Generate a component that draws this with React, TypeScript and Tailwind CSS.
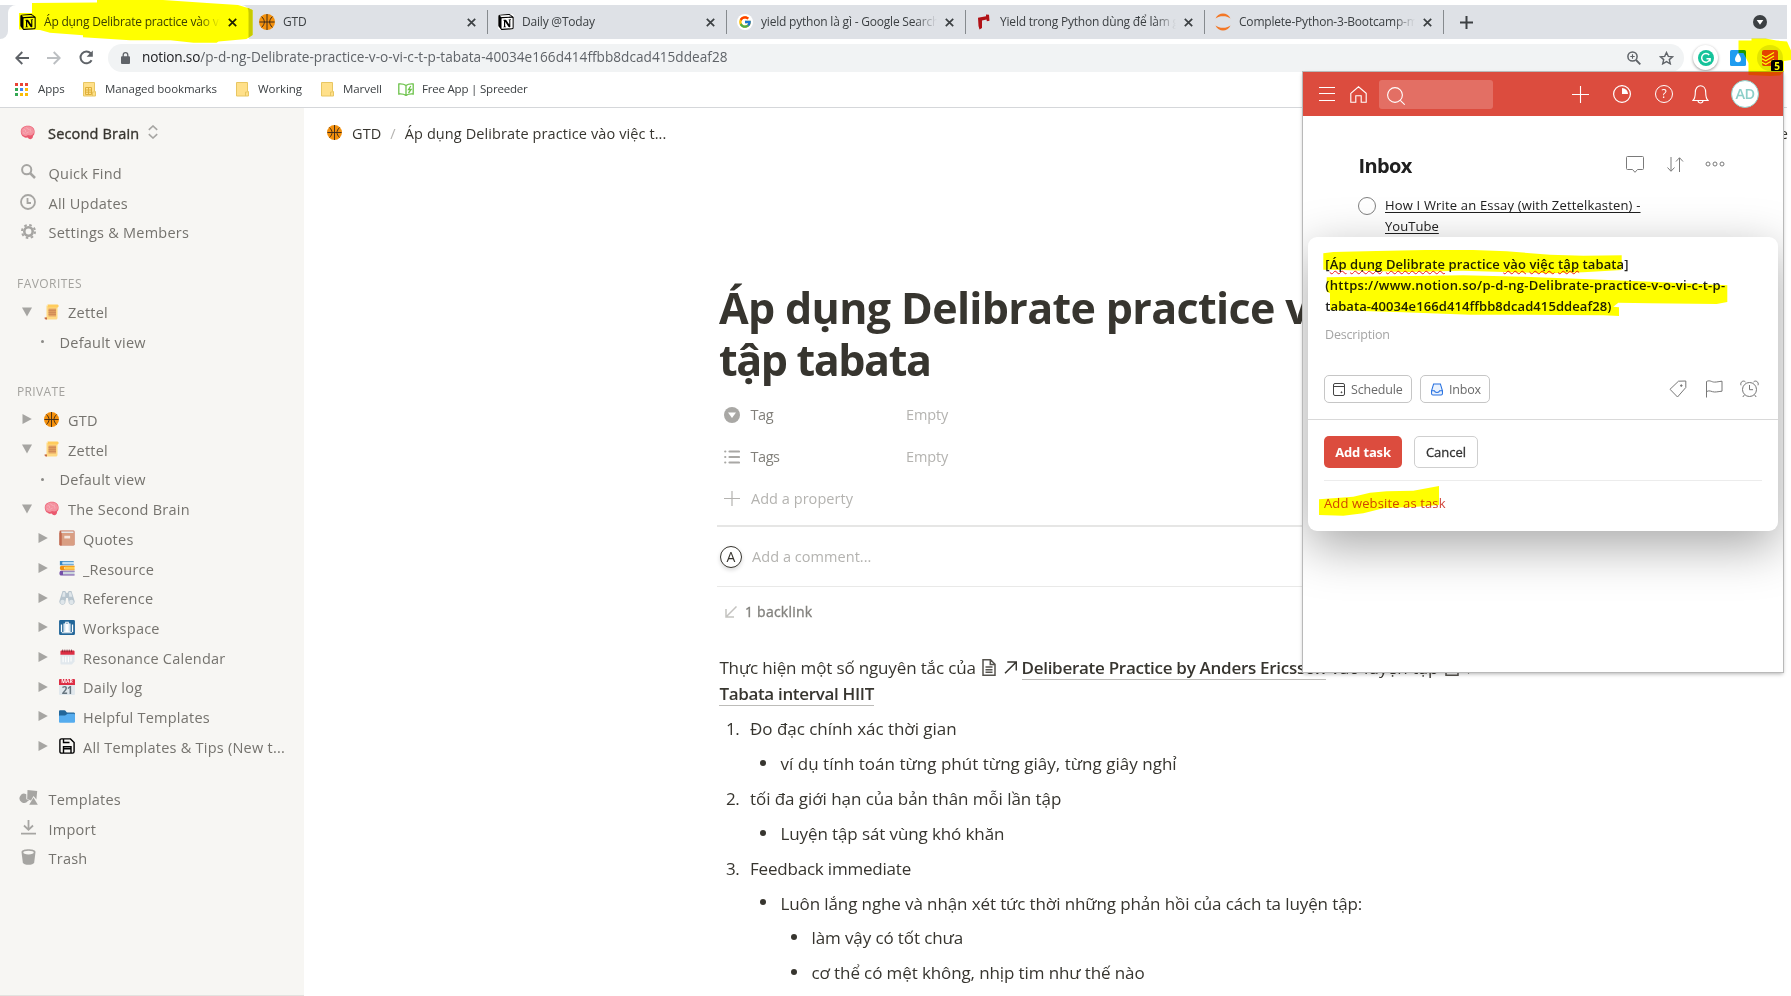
import type { ReactNode } from "react";
import { FcGoogle } from "react-icons/fc";
import { SiNotion } from "react-icons/si";

/* ---------- small drawings ---------- */

function Ball({ size = 15 }: { size?: number }) {
  return (
    <svg width={size} height={size} viewBox="0 0 36 36" className="shrink-0">
      <circle cx="18" cy="18" r="18" fill="#f4900c" />
      <path
        d="M18 0v36M1 18h34M6 6c4 4 6 8 6 12s-2 8-6 12M30 6c-4 4-6 8-6 12s2 8 6 12"
        stroke="#3b2a1a"
        strokeWidth="2.2"
        fill="none"
      />
    </svg>
  );
}

function Brain() {
  return (
    <svg width="15" height="15" viewBox="0 0 36 36" className="shrink-0">
      <path d="M2 17C1 8 9 2 19 2c10 0 16 6 16 14 0 4-1 8-4 10 1 4-2 8-6 8-3 0-5-2-7-4-3 1-7 0-9-2-4 0-7-6-7-11z" fill="#ea596e" />
      <path d="M3 15C3 8 11 3 19 3c9 0 14 5 15 12 0 4-2 7-5 9-3 2-7 1-10 0-3 3-7 3-9 1-4 0-7-4-7-10z" fill="#f4929f" />
      <path d="M8 12c4-3 7 2 5 5M15 6c1 4 6 2 7 6M25 9c-3 4 3 5 1 9M14 21c2-3 6-2 7-5M7 19c2-1 4 0 5 2" stroke="#f7bac4" strokeWidth="1.6" fill="none" />
    </svg>
  );
}

function Scroll() {
  return (
    <svg width="15" height="16" viewBox="0 0 30 32" className="shrink-0">
      <path d="M5 3h22v24c0 3-1 4-4 4H4c-3 0-3-5 0-5h1z" fill="#ffd983" />
      <path d="M6 1h21c3 0 3 6 0 6H8V4C8 2 7 1 6 1z" fill="#ffcc5c" />
      <path d="M1 27h5v4H4c-2 0-3-2-3-4z" fill="#c1694f" />
      <path d="M9 9h15v16H9z" fill="#e5a563" />
      <path d="M9 12.500h15M9 16.500h15M9 20.500h15" stroke="#c1794f" strokeWidth="1.500" />
    </svg>
  );
}

function Notebook() {
  return (
    <svg width="16" height="16" viewBox="0 0 36 36" className="shrink-0">
      <rect x="1" y="1" width="34" height="34" rx="3" fill="#c1694f" />
      <path d="M5 3h28v5H5z" fill="#e6e7e8" />
      <rect x="5" y="7" width="29" height="27" rx="2" fill="#d99e82" />
      <path d="M1 6h5v29H4c-2 0-3-1-3-3z" fill="#c1694f" />
      <rect x="12" y="13" width="13" height="6" fill="#f5e6df" />
    </svg>
  );
}

function Books() {
  return (
    <svg width="16" height="16" viewBox="0 0 36 36" className="shrink-0">
      <path d="M2 2h31v3H8v4h25v3H2z" fill="#3b88c3" />
      <path d="M8 4h25v6H8z" fill="#bfe0f5" />
      <path d="M5 13h30v3H12v5h23v2H5c-4-1-4-9 0-10z" fill="#f4900c" />
      <path d="M13 15h22v6H13z" fill="#ffcc4d" />
      <path d="M4 24h31v3H9v5h26v3H4c-4-1-4-10 0-11z" fill="#7450a8" />
      <path d="M9 26h26v6H9z" fill="#ccd6dd" />
    </svg>
  );
}

function Binoculars() {
  return (
    <svg width="16" height="16" viewBox="0 0 36 36" className="shrink-0">
      <path d="M8 2h6l3 5h2l3-5h6l7 22a7 7 0 0 1-13 5l-2-11h-4l-2 11a7 7 0 0 1-13-5z" fill="#b8c5ce" />
      <circle cx="8" cy="27" r="5" fill="#dfe6ea" />
      <circle cx="28" cy="27" r="5" fill="#dfe6ea" />
      <path d="M9 5h5v10H7zM22 5h5l3 10h-7z" fill="#dfe6ea" />
    </svg>
  );
}

function Luggage() {
  return (
    <svg width="16" height="15" viewBox="0 0 36 34" className="shrink-0">
      <rect width="36" height="34" rx="3" fill="#226699" />
      <path d="M4 10h3v17H4zM10 8h16v19H10zM29 10h3v17h-3zM14 4h8v5h-2V6h-4v3h-2zM6 28h24v2H6z" fill="#fff" />
      <path d="M13 9v17M23 9v17" stroke="#9ec6e2" strokeWidth="1.500" />
    </svg>
  );
}

function SpiralCalendar() {
  return (
    <svg width="15" height="16" viewBox="0 0 34 36" className="shrink-0">
      <path d="M1 10h32v18l-6 7H4c-2 0-3-1-3-3z" fill="#e1e8ed" />
      <path d="M3 3h28c2 0 2 2 2 4v6H1V7c0-2 0-4 2-4z" fill="#dd2e44" />
      <path d="M6 1v6M11 1v6M16 1v6M21 1v6M26 1v6" stroke="#66242e" strokeWidth="1.6" />
      <path d="M7 17v13M13 17v13M19 17v13M25 17v11" stroke="#fff" strokeWidth="2.5" />
    </svg>
  );
}

function DayCalendar() {
  return (
    <span className="flex h-4 w-4 shrink-0 flex-col overflow-hidden rounded-[1px] bg-[#e1e8ed]">
      <span className="flex h-[6px] items-center justify-center bg-[#dd2e44] text-[5px] leading-none font-bold tracking-normal text-white">MAR</span>
      <span className="flex h-[10px] items-center justify-center text-[10px] leading-none font-bold tracking-tighter text-[#66757f]">21</span>
    </span>
  );
}

function BlueFolder() {
  return (
    <svg width="16" height="13" viewBox="0 0 36 28" className="shrink-0">
      <path d="M0 3c0-2 1-3 3-3h9c3 0 4 5 7 5h13c2 0 4 1 4 3v17H0z" fill="#226699" />
      <path d="M36 25c0 2-1 3-3 3H3c-2 0-3-1-3-3V14c0-2 1-2 3-2h10c3 0 4-4 7-4h13c2 0 3 1 3 3z" fill="#55acee" />
    </svg>
  );
}

function Floppy() {
  return (
    <svg width="16" height="16" viewBox="0 0 16 16" fill="none" stroke="#000" strokeWidth="1.400" className="shrink-0">
      <path d="M2.500.9h9L15.100 4.500v9a1.600 1.600 0 0 1-1.600 1.600h-11A1.600 1.600 0 0 1 .9 13.500v-11A1.600 1.600 0 0 1 2.500.9z" />
      <path d="M4.500 1v3.500h6M4.500 15V8.700h7.500V15M4.500 10.800h7.500" />
    </svg>
  );
}

function Tri({ open }: { open?: boolean }) {
  return (
    <svg width="10" height="10" viewBox="0 0 10 10" className="shrink-0" fill="#a6a5a2">
      {open ? <path d="M0 .5h10L5 9.500z" /> : <path d="M.5 0v10L9.800 5z" />}
    </svg>
  );
}

/* ---------- browser chrome ---------- */

function TabX({ dark }: { dark?: boolean }) {
  return (
    <svg width="9" height="9" viewBox="0 0 9 9" className="shrink-0" stroke={dark ? "#202124" : "#3c4043"} strokeWidth="1.700">
      <path d="M.8.8l7.400 7.400M8.200.8L.8 8.200" />
    </svg>
  );
}

function NotionMark() {
  return <SiNotion size={16} color="#000" className="rounded-[3px] bg-white" />;
}

function Tab({ icon, title, fade }: { icon: ReactNode; title: string; fade?: boolean }) {
  return (
    <div className="flex w-[239px] shrink-0 items-center pl-[10.500px]">
      <span className="flex w-4 justify-center">{icon}</span>
      <span
        className={
          fade
            ? "ml-2 w-[176px] overflow-hidden whitespace-nowrap [mask-image:linear-gradient(to_right,black_88%,transparent)]"
            : "ml-2 w-[176px] overflow-hidden whitespace-nowrap"
        }
      >
        {title}
      </span>
      <span className="ml-2 flex">
        <TabX />
      </span>
      <span className="ml-auto h-6 w-px bg-[#868a8e]" />
    </div>
  );
}

function TabStrip() {
  return (
    <div className="mt-[5px] mr-1 flex h-[34px] bg-[#dee1e6] text-[12px] tracking-[-0.200px] text-[#3c4043]">
      <div className="flex w-2 items-stretch bg-white">
        <div className="w-full rounded-br-lg bg-[#dee1e6]" />
      </div>
      <div className="flex w-[240.500px] shrink-0 items-center rounded-t-lg bg-white pl-3">
        <NotionMark />
        <span className="ml-2 w-[176px] overflow-hidden whitespace-nowrap [mask-image:linear-gradient(to_right,black_88%,transparent)]">
          Áp dụng Delibrate practice vào việc tập tabata
        </span>
        <span className="ml-[7.500px] flex">
          <TabX dark />
        </span>
      </div>
      <Tab icon={<Ball size={16} />} title="GTD" />
      <Tab icon={<NotionMark />} title="Daily @Today" />
      <Tab
        icon={
          <span className="rounded-full bg-white p-px">
            <FcGoogle size={14} />
          </span>
        }
        title="yield python là gì - Google Search"
        fade
      />
      <Tab
        icon={
          <svg width="14" height="16" viewBox="0 0 14 16" fill="#b11116">
            <path d="M1 3.800l8-1.600V.5l3 .3.500 6-2.700.4-.2-1.600-4.600.9V14l-2.500 1.500L1.500 12z" />
          </svg>
        }
        title="Yield trong Python dùng để làm gì"
        fade
      />
      <Tab
        icon={
          <svg width="16" height="18" viewBox="0 0 16 18" fill="#f37726">
            <path d="M.5 5.500C2 2 5 .5 8 .5s6 1.500 7.500 5C13 3.800 11 3.200 8 3.200S3 3.800.5 5.500zM.5 12.500c1.500 3.500 4.500 5 7.500 5s6-1.500 7.500-5c-2.500 1.700-4.500 2.300-7.500 2.300s-5-.6-7.500-2.300z" />
          </svg>
        }
        title="Complete-Python-3-Bootcamp-master"
        fade
      />
      <div className="flex flex-1 items-center justify-between pr-5 pl-4">
        <svg width="13" height="13" viewBox="0 0 13 13" stroke="#3c4043" strokeWidth="2">
          <path d="M6.500 0v13M0 6.500h13" />
        </svg>
        <svg width="14" height="14" viewBox="0 0 14 14">
          <circle cx="7" cy="7" r="7" fill="#3c4043" />
          <path d="M3.700 5h6.600L7 9.800z" fill="#fff" />
        </svg>
      </div>
    </div>
  );
}

function Toolbar() {
  return (
    <div className="flex h-9 items-center pt-px pl-[15px]">
      <svg width="14" height="14" viewBox="0 0 14 14" fill="none" stroke="#5f6368" strokeWidth="1.900">
        <path d="M14 7H1.500M7.300 1L1.300 7l6 6" />
      </svg>
      <svg width="14" height="14" viewBox="0 0 14 14" fill="none" stroke="#bcbfc2" strokeWidth="1.900" className="ml-[18px]">
        <path d="M0 7h12.500M6.700 1l6 6-6 6" />
      </svg>
      <svg width="15" height="15" viewBox="0 0 15 15" className="ml-[18px]">
        <path d="M12.600 10.200A5.900 5.900 0 1 1 11.700 3.300" fill="none" stroke="#5f6368" strokeWidth="2" />
        <path d="M13.800.5v6.200H7.600z" fill="#5f6368" />
      </svg>
      <div className="ml-[14px] flex h-7 w-[1576px] items-center rounded-full bg-[#f1f3f4] pr-[10px] pl-[13px]">
        <svg width="9" height="12" viewBox="0 0 9 12">
          <rect y="4.200" width="9" height="7.800" rx="1" fill="#5f6368" />
          <path d="M2.200 5V3a2.300 2.300 0 0 1 4.600 0v2" fill="none" stroke="#5f6368" strokeWidth="1.300" />
        </svg>
        <span className="ml-3 text-[13.600px] tracking-[0.030px] whitespace-nowrap text-[#5f6368]">
          <span className="tracking-[-0.150px] text-[#202124]">notion.so</span>
          /p-d-ng-Delibrate-practice-v-o-vi-c-t-p-tabata-40034e166d414ffbb8dcad415ddeaf28
        </span>
        <span className="flex-1" />
        <svg width="14" height="14" viewBox="0 0 14 14" fill="none" stroke="#5f6368" strokeWidth="1.500">
          <circle cx="5.500" cy="5.500" r="4.600" />
          <path d="M9 9l4.300 4.300" strokeWidth="1.800" />
          <path d="M5.500 3.300v4.400M3.300 5.500h4.400" strokeWidth="1.100" />
        </svg>
        <svg width="15" height="14" viewBox="0 0 15 14" fill="none" stroke="#5f6368" strokeWidth="1.400" className="ml-[18px]">
          <path d="M7.500 1.500l1.800 3.900 4.200.4-3.200 2.800 1 4.200-3.800-2.200-3.800 2.200 1-4.200L1.500 5.800l4.200-.4z" />
        </svg>
      </div>
      <span className="ml-[9px] flex h-[25px] w-[25px] items-center justify-center rounded-full bg-white shadow-[0_1px_3px_rgba(0,0,0,0.400)]">
        <svg width="16" height="16" viewBox="0 0 16 16">
          <circle cx="8" cy="8" r="8" fill="#15c39a" />
          <path d="M11.200 5A4.300 4.300 0 1 0 12 9.300M8.500 8.800h3.600v2.700" fill="none" stroke="#fff" strokeWidth="1.500" />
        </svg>
      </span>
      <svg width="16" height="16" viewBox="0 0 16 16" className="ml-[12px]">
        <rect width="16" height="16" rx="1.500" fill="#1f9cf0" />
        <path d="M8 3c2 3 3 4.600 3 6.300a3 3 0 0 1-6 0C5 7.600 6 6 8 3z" fill="#fff" />
      </svg>
      <span className="relative ml-[11px] flex h-[26px] w-[26px] items-center justify-center rounded-full bg-[#e3e5e7]">
        <svg width="16" height="16" viewBox="0 0 16 16">
          <rect width="16" height="16" rx="2" fill="#e44332" />
          <path d="M0 5.200l3.800 2L12 2.600M0 8.700l3.800 2L12 6.100M0 12.200l3.800 2L12 9.600" fill="none" stroke="#fff" strokeWidth="1.200" />
        </svg>
        <span className="absolute right-0 -bottom-[1px] flex h-3 w-3 items-center justify-center rounded-[2px] bg-black text-[10px] leading-none font-bold text-white">
          5
        </span>
      </span>
    </div>
  );
}

function YellowFolder({ grid }: { grid?: boolean }) {
  return (
    <svg width="13" height="15" viewBox="0 0 13 15">
      <path d="M.5.5h11v9h1v4.500H.5z" fill="#ffe08a" stroke="#e8c662" />
      <path d="M9.500 14V10h2" fill="none" stroke="#e8c662" />
      {grid && <path d="M2.500 5.500h6v7h-6zM2.500 8h6M2.500 10.200h6M5.500 5.500v7" fill="none" stroke="#dfb03a" />}
    </svg>
  );
}

function Bookmarks() {
  const colors = ["#ea4335", "#ea4335", "#ea4335", "#34a853", "#4285f4", "#fbbc04", "#34a853", "#fbbc04", "#fbbc04"];
  return (
    <div className="mr-1 flex h-[33px] items-center border-b border-[#d5d7da] pb-[4px] pl-[15px] text-[11.500px] tracking-[-0.070px] text-[#3c4043]">
      <svg width="13" height="13" viewBox="0 0 13 13">
        {colors.map((c, i) => (
          <rect key={i} x={(i % 3) * 5} y={Math.floor(i / 3) * 5} width="3" height="3" fill={c} />
        ))}
      </svg>
      <span className="ml-[10px] w-[45px]">Apps</span>
      <YellowFolder grid />
      <span className="ml-[9px] w-[131px] whitespace-nowrap">Managed bookmarks</span>
      <YellowFolder />
      <span className="ml-[9px] w-[63px]">Working</span>
      <YellowFolder />
      <span className="ml-[9px] w-[55px]">Marvell</span>
      <svg width="16" height="13" viewBox="0 0 16 13" fill="none" stroke="#6cc24a" strokeWidth="1.300">
        <path d="M8 2.500C6 1 3.500.8.800 1v10c2.700-.2 5.200 0 7.200 1.500 2-1.500 4.500-1.700 7.200-1.500V1C12.500.8 10 1 8 2.500zM8 2.500v10" />
        <path d="M12.800 3l-2.300 3.500h2.600L10.500 10" />
      </svg>
      <span className="ml-2 tracking-[-0.200px] whitespace-nowrap">Free App | Spreeder</span>
    </div>
  );
}

/* ---------- sidebar ---------- */

function MenuRow({ icon, label }: { icon: ReactNode; label: string }) {
  return (
    <div className="flex h-[29.700px] items-center pl-[19px]">
      <span className="mb-[3px] flex w-[18px] justify-center">{icon}</span>
      <span className="mt-px ml-[11.500px]">{label}</span>
    </div>
  );
}

function PageRow({ icon, label, open, nested }: { icon: ReactNode; label: string; open?: boolean; nested?: boolean }) {
  return (
    <div className={nested ? "flex h-[29.700px] items-center pl-[38px]" : "flex h-[29.700px] items-center pl-[22px]"}>
      <span className="mb-[2px] flex">
        <Tri open={open} />
      </span>
      <span className="mb-[2px] ml-[11px] flex w-4 justify-center">{icon}</span>
      <span className={nested ? "mt-px ml-[8px] whitespace-nowrap" : "mt-px ml-[9px] whitespace-nowrap"}>{label}</span>
    </div>
  );
}

function ViewRow() {
  return (
    <div className="flex h-[29.700px] items-center pl-[41px]">
      <span className="mb-px h-[3px] w-[3px] rounded-full bg-[#8b8a87]" />
      <span className="mt-px ml-[15.500px]">Default view</span>
    </div>
  );
}

function Sidebar() {
  return (
    <aside className="w-[304px] shrink-0 border-b border-[#e3e2df] bg-[#f7f6f3] text-[14.500px] tracking-[0.240px] text-[#75736e]">
      <div className="flex h-[50.500px] items-center pl-5 tracking-[0.180px] text-[#37352f]">
        <span className="mb-0.5">
          <Brain />
        </span>
        <span className="mt-px ml-[13px] [-webkit-text-stroke:0.350px_#37352f]">Second Brain</span>
        <svg width="10" height="14" viewBox="0 0 10 14" fill="none" stroke="#a6a5a2" strokeWidth="1.600" className="mb-0.5 ml-[9px]">
          <path d="M.8 4.800L5 1l4.200 3.800M.8 9.200L5 13l4.200-3.800" />
        </svg>
      </div>
      <MenuRow
        label="Quick Find"
        icon={
          <svg width="15" height="15" viewBox="0 0 15 15" fill="none" stroke="#a6a5a2" strokeWidth="2">
            <circle cx="5.700" cy="5.700" r="4.600" />
            <path d="M9 9l5 5" strokeWidth="2.500" />
          </svg>
        }
      />
      <MenuRow
        label="All Updates"
        icon={
          <svg width="16" height="16" viewBox="0 0 16 16" fill="none" stroke="#a6a5a2" strokeWidth="1.800">
            <circle cx="8" cy="8" r="7" />
            <path d="M7.500 4v5H11" />
          </svg>
        }
      />
      <MenuRow
        label="Settings & Members"
        icon={
          <svg width="15" height="15" viewBox="0 0 15 15" fill="none" stroke="#a6a5a2">
            <circle cx="7.500" cy="7.500" r="4.200" strokeWidth="2.600" />
            <circle cx="7.500" cy="7.500" r="6.500" strokeWidth="2" strokeDasharray="2.550 2.550" />
          </svg>
        }
      />
      <div className="mt-[22.300px] flex h-7 items-center pl-[17px] text-[12px] tracking-[0.450px] text-[#a3a29e]">FAVORITES</div>
      <PageRow open icon={<Scroll />} label="Zettel" />
      <ViewRow />
      <div className="mt-[20.400px] flex h-7 items-center pl-[17px] text-[12px] tracking-[0.350px] text-[#a3a29e]">PRIVATE</div>
      <PageRow icon={<Ball />} label="GTD" />
      <PageRow open icon={<Scroll />} label="Zettel" />
      <ViewRow />
      <PageRow open icon={<Brain />} label="The Second Brain" />
      <PageRow nested icon={<Notebook />} label="Quotes" />
      <PageRow nested icon={<Books />} label="_Resource" />
      <PageRow nested icon={<Binoculars />} label="Reference" />
      <PageRow nested icon={<Luggage />} label="Workspace" />
      <PageRow nested icon={<SpiralCalendar />} label="Resonance Calendar" />
      <PageRow nested icon={<DayCalendar />} label="Daily log" />
      <PageRow nested icon={<BlueFolder />} label="Helpful Templates" />
      <PageRow nested icon={<Floppy />} label="All Templates & Tips (New t..." />
      <div className="h-[22.500px]" />
      <MenuRow
        label="Templates"
        icon={
          <svg width="19" height="15" viewBox="0 0 19 15" fill="#a6a5a2" className="shrink-0">
            <path d="M8.500 0l9.700 1-.8 8.500L14.500 6 12 10.500 8.200 9z" />
            <path d="M7.300 4.200A4.600 4.600 0 1 0 8.900 11l1.500-1-3.100-.8z" />
            <path d="M14.500 7.600l4.300 7.200h-8.600z" />
          </svg>
        }
      />
      <MenuRow
        label="Import"
        icon={
          <svg width="15" height="15" viewBox="0 0 15 15" fill="none" stroke="#a6a5a2" strokeWidth="1.800">
            <path d="M7.500 0v9.500M3 5.500l4.500 4.300L12 5.500M0 13.700h15" />
          </svg>
        }
      />
      <MenuRow
        label="Trash"
        icon={
          <svg width="15" height="16" viewBox="0 0 15 16">
            <path d="M.5 3C.5 1 4 .2 7.500.2s7 .8 7 2.800l-1.300 10.500c-.4 1.600-3 2.300-5.700 2.300s-5.300-.7-5.700-2.300z" fill="#a6a5a2" />
            <ellipse cx="7.500" cy="3.600" rx="5.200" ry="1.800" fill="#f7f6f3" />
          </svg>
        }
      />
    </aside>
  );
}

/* ---------- document ---------- */

function Property({ icon, name }: { icon: ReactNode; name: string }) {
  return (
    <div className="flex h-[41.700px] items-center pl-[7px]">
      <span className="flex w-4 justify-center">{icon}</span>
      <span className="ml-[10.500px] w-[155.500px] tracking-[-0.450px] text-[#82807b]">{name}</span>
      <span className="tracking-[-0.150px] text-[#b4b3b0]">Empty</span>
    </div>
  );
}

function PageGlyph() {
  return (
    <span className="mr-[1.500px] ml-[2px] inline-flex w-[38px] items-center justify-between align-[-2px]">
      <svg width="14" height="17" viewBox="0 0 14 17" fill="none" stroke="#55534e" strokeWidth="1.500">
        <path d="M1 .8h7.500L13 5.300v10.900H1zM8.300 1v4.500H13M3.500 8h7M3.500 10.700h7M3.500 13.300h7" />
      </svg>
      <svg width="13" height="13" viewBox="0 0 13 13" fill="none" stroke="#37352f" strokeWidth="1.500" className="mr-[3px]">
        <path d="M1 12.300L12 1.200M3.300.9h9v8.600" />
      </svg>
    </span>
  );
}

function Numbered({ n, children }: { n: number; children: ReactNode }) {
  return (
    <div className="flex h-[34.850px] items-center pl-[9px]">
      <span className="w-6 tracking-[-0.500px]">{n}.</span>
      <span>{children}</span>
    </div>
  );
}

function Bullet({ deep, children }: { deep?: boolean; children: ReactNode }) {
  return (
    <div className={deep ? "flex h-[34.850px] items-center pl-[73.500px]" : "flex h-[34.850px] items-center pl-[42.500px]"}>
      <span className="mb-[2px] h-[6px] w-[6px] rounded-full bg-[#37352f]" />
      <span className="ml-[15px]">{children}</span>
    </div>
  );
}

function Doc() {
  return (
    <main className="min-w-0 flex-1 overflow-hidden bg-white text-[#37352f]">
      <div className="flex h-[51px] items-center pr-[3px] pl-[23px] text-[14.500px] tracking-[0.100px] whitespace-nowrap">
        <span className="mb-[3px] flex">
          <Ball />
        </span>
        <span className="ml-[10px]">GTD</span>
        <span className="ml-[9px] text-[#b4b3b0]">/</span>
        <span className="ml-[9px]">Áp dụng Delibrate practice vào việc t...</span>
        <span className="ml-auto">Share</span>
      </div>

      <div className="ml-[413px] w-[810px] pt-[123px]">
        <h1 className="h-[104px] pl-0.5 text-[43px] leading-[52px] font-bold whitespace-nowrap">
          <span className="block tracking-[-0.660px]">Áp dụng Delibrate practice vào việc</span>
          <span className="block tracking-[-1.400px]">tập tabata</span>
        </h1>

        <div className="mt-[8.500px] text-[14.500px]">
          <Property
            name="Tag"
            icon={
              <svg width="16" height="16" viewBox="0 0 16 16">
                <circle cx="8" cy="8" r="8" fill="#a9a8a5" />
                <path d="M4 5.500h8L8 11z" fill="#fff" />
              </svg>
            }
          />
          <Property
            name="Tags"
            icon={
              <svg width="16" height="14" viewBox="0 0 16 14" stroke="#a9a8a5" strokeWidth="2.200" strokeLinecap="round">
                <path d="M5.500 1.500H15M5.500 7H15M5.500 12.500H15M1.200 1.500h.1M1.200 7h.1M1.200 12.500h.1" />
              </svg>
            }
          />
          <div className="flex h-[41.700px] items-center pl-[7px] tracking-[0.040px] text-[#b4b3b0]">
            <svg width="16" height="15" viewBox="0 0 16 15" stroke="#b4b3b0" strokeWidth="1.200">
              <path d="M8 0v15M0 7.500h16" />
            </svg>
            <span className="ml-[11px]">Add a property</span>
          </div>
        </div>

        <div className="mt-[5.100px] flex h-[62px] items-center border-t-2 border-b border-t-[#e6e6e5] border-b-[#e9e9e8] pt-[2px] pl-[3px] text-[14.500px] text-[#b4b3b0]">
          <span className="flex h-[22px] w-[22px] items-center justify-center rounded-full border border-[#37352f] bg-white text-[14px] leading-none text-[#37352f] shadow-[0_2px_4px_rgba(0,0,0,0.150)]">
            A
          </span>
          <span className="ml-[10px] tracking-[0.050px]">Add a comment...</span>
        </div>

        <div className="flex h-[50px] items-center pl-2 text-[14px] tracking-[0.230px] text-[#83827e]">
          <svg width="12" height="12" viewBox="0 0 12 12" fill="none" stroke="#c4c3c0" strokeWidth="1.500">
            <path d="M11.500.5L1.500 10.500M1 3v8h8" />
          </svg>
          <span className="ml-2 [-webkit-text-stroke:0.350px_#83827e]">1 backlink</span>
        </div>

        <div className="mt-[18px] pl-[2.400px] text-[17px] leading-[26px] tracking-[-0.150px] whitespace-nowrap">
          Thực hiện một số nguyên tắc của{" "}
          <PageGlyph />
          <span className="border-b border-[#bdbcb9] font-semibold tracking-[-0.280px]">Deliberate Practice by Anders Ericsson</span>
          <span className="ml-px tracking-[0.100px]"> vào luyện tập </span>
          <PageGlyph />
          <br />
          <span className="border-b border-[#bdbcb9] font-semibold tracking-[-0.330px]">Tabata interval HIIT</span>
        </div>

        <div className="mt-[5px] text-[17px] tracking-[-0.110px] whitespace-nowrap">
          <Numbered n={1}>
            <span className="tracking-[-0.030px]">Đo đạc chính xác thời gian</span>
          </Numbered>
          <Bullet>
            <span className="tracking-[0.020px]">ví dụ tính toán từng phút từng giây, từng giây nghỉ</span>
          </Bullet>
          <Numbered n={2}>
            <span className="tracking-[-0.060px]">tối đa giới hạn của bản thân mỗi lần tập</span>
          </Numbered>
          <Bullet>Luyện tập sát vùng khó khăn</Bullet>
          <Numbered n={3}>
            <span className="tracking-[-0.200px]">Feedback immediate</span>
          </Numbered>
          <Bullet>Luôn lắng nghe và nhận xét tức thời những phản hồi của cách ta luyện tập:</Bullet>
          <Bullet deep>làm vậy có tốt chưa</Bullet>
          <Bullet deep>cơ thể có mệt không, nhịp tim như thế nào</Bullet>
        </div>
      </div>
    </main>
  );
}

/* ---------- extension popup ---------- */

function Misspelt({ children }: { children: ReactNode }) {
  return (
    <span className="underline decoration-[#f01818] decoration-wavy decoration-1 underline-offset-[1px] [text-decoration-skip-ink:none]">
      {children}
    </span>
  );
}

function PopupHeader() {
  return (
    <div className="flex h-11 items-center bg-[#dc4c3e] pl-4">
      <svg width="16" height="14" viewBox="0 0 16 14" stroke="#fff" strokeWidth="1">
        <path d="M0 .5h16M0 6.500h16M0 13.500h16" />
      </svg>
      <svg width="17" height="17" viewBox="0 0 17 17" fill="none" stroke="#fff" strokeWidth="1.100" className="ml-[15px]">
        <path d="M.8 7.300L8.500.8l7.700 6.500v9h-5v-6.500h-5.400v6.500h-5z" />
      </svg>
      <div className="ml-3 flex h-[29px] w-[114px] items-center rounded-[3px] bg-white/20 pl-2">
        <svg width="18" height="18" viewBox="0 0 18 18" fill="none" stroke="#fff" strokeWidth="1.100" className="mt-1">
          <circle cx="8" cy="8" r="7.400" />
          <path d="M13.300 13.300l4.500 4.400" />
        </svg>
      </div>
      <svg width="17" height="17" viewBox="0 0 17 17" stroke="#fff" strokeWidth="1.100" className="ml-[79px]">
        <path d="M8.500 0v17M0 8.500h17" />
      </svg>
      <svg width="18" height="18" viewBox="0 0 18 18" className="ml-[24px]">
        <circle cx="9" cy="9" r="8.400" fill="none" stroke="#fff" strokeWidth="1.200" />
        <path d="M9 9V3a6 6 0 0 1 6 6z" fill="#fff" />
      </svg>
      <span className="ml-6 flex h-[18px] w-[18px] items-center justify-center rounded-full border border-white text-[12px] leading-none text-white">?</span>
      <svg width="17" height="19" viewBox="0 0 17 19" fill="none" stroke="#fff" strokeWidth="1.100" className="ml-[19px]">
        <path d="M1 15.500c1.800-1.800 2.300-3.500 2.300-8C3.300 3.500 5.500.8 8.500.8s5.200 2.700 5.200 6.700c0 4.500.5 6.200 2.300 8zM6 15.800c.3 3 4.700 3 5 0" />
      </svg>
      <span className="ml-[22px] flex h-[28px] w-[28px] items-center justify-center rounded-full border border-[#8fcfc9] bg-white text-[14.500px] font-semibold tracking-[-0.600px] text-[#8ccfc9]">
        AD
      </span>
    </div>
  );
}

function TaskCard() {
  return (
    <div className="absolute top-[165px] left-[5px] h-[294px] w-[470px] rounded-[9px] bg-white shadow-[0_15px_50px_rgba(0,0,0,0.350)]">
      <div className="pt-[17px] pl-[17.300px] text-[13px] leading-[21px] font-semibold whitespace-nowrap text-[#202020]">
        <div className="tracking-[0.110px]">
          [<Misspelt>Áp</Misspelt> <Misspelt>dụng</Misspelt> <Misspelt>Delibrate</Misspelt> practice <Misspelt>vào</Misspelt>{" "}
          <Misspelt>việc</Misspelt> <Misspelt>tập</Misspelt> tabata]
        </div>
        <div className="tracking-[0.300px]">(https://www.notion.so/p-d-ng-Delibrate-practice-v-o-vi-c-t-p-</div>
        <div className="tracking-[0.080px]">tabata-40034e166d414ffbb8dcad415ddeaf28)</div>
      </div>
      <div className="mt-[7px] pl-[17px] text-[12.500px] leading-[21px] tracking-[-0.180px] text-[#a5a5a5]">Description</div>
      <div className="mt-[30px] flex h-7 items-center pl-4 text-[12.500px] tracking-[-0.180px] text-[#6a6a6a]">
        <div className="flex h-full w-[88px] items-center rounded-[5px] border border-[#c6c6c6] pl-2">
          <svg width="12" height="13" viewBox="0 0 12 13" fill="none" stroke="#444">
            <rect x=".5" y=".5" width="11" height="12" rx="1.500" />
            <path d="M1 3.500h10" />
            <circle cx="8.500" cy="9.300" r=".5" fill="#444" />
          </svg>
          <span className="mt-[3px] ml-1.5">Schedule</span>
        </div>
        <div className="ml-2 flex h-full w-[70px] items-center rounded-[5px] border border-[#c6c6c6] pl-2.5">
          <svg width="12" height="13" viewBox="0 0 13 13" fill="#eaf2fd" stroke="#246fe0" strokeWidth="1.100">
            <path d="M2.800.6h7.400L12.400 8v2.900c0 .9-.6 1.500-1.500 1.500H2.100c-.9 0-1.500-.6-1.500-1.500V8z" />
            <path d="M.6 7.800h3c.4 1.700 1.500 2 2.900 2s2.500-.3 2.900-2h3" fill="none" />
          </svg>
          <span className="mt-[3px] ml-1.5">Inbox</span>
        </div>
        <span className="flex-1" />
        <div className="flex items-center gap-[17.500px] pr-[19px]">
          <svg width="18" height="18" viewBox="0 0 18 18" fill="none" stroke="#777" strokeWidth="1">
            <path d="M9.500 1.200l7.300-.2v6.500L8.500 17 1 9.300z" />
            <circle cx="12.300" cy="5.600" r=".8" fill="#777" />
          </svg>
          <svg width="18" height="18" viewBox="0 0 18 18" fill="none" stroke="#777" strokeWidth="1">
            <path d="M1.500 17.500V1.500c3.500-1.800 5 .6 8 .6 2.500 0 4.500-.6 7.500-.9v10c-3 .3-5 .8-7.500.8-3 0-4.500-2.200-8-.5" />
          </svg>
          <svg width="19" height="18" viewBox="0 0 19 18" fill="none" stroke="#777" strokeWidth="1">
            <circle cx="9.500" cy="9.500" r="7" />
            <path d="M9.500 5v4.700H13M4.500 14.800L2.800 17M14.500 14.800l1.700 2.200M1 5.300C-.3 2 3.500-.3 5.500 2M18 5.300C19.300 2 15.500-.3 13.500 2" />
          </svg>
        </div>
      </div>
      <div className="mt-4 border-t border-[#d9d9d9] px-4 pt-4 text-[13px]">
        <div className="flex h-8 gap-3">
          <button className="w-[78px] rounded-[5px] bg-[#dc4c3e] pt-px font-bold tracking-[-0.150px] text-white">Add task</button>
          <button className="w-16 rounded-[5px] border border-[#cfcfcf] pt-px text-[#333] [-webkit-text-stroke:0.300px_#333]">Cancel</button>
        </div>
        <div className="mt-3 border-t border-[#ececec] pt-3 leading-[21px] tracking-[0.120px] text-[#d1453b]">Add website as task</div>
      </div>
    </div>
  );
}

function Popup() {
  return (
    <div className="absolute top-[72px] left-[1303px] h-[600px] w-[480px] overflow-hidden bg-white outline outline-[#b9b9b9] shadow-[0_2px_4px_rgba(0,0,0,0.300)]">
      <PopupHeader />
      <div className="flex h-[100px] items-center pr-[58px] pl-[55.500px] text-[#202020]">
        <h2 className="flex-1 text-[20px] font-bold tracking-[-0.650px]">Inbox</h2>
        <div className="mb-1 flex items-center">
          <svg width="18" height="17" viewBox="0 0 18 17" fill="none" stroke="#7a7a7a">
            <path d="M1.500.5h15a1 1 0 0 1 1 1v11a1 1 0 0 1-1 1h-5l-2.500 2.800-2.500-2.800h-5a1 1 0 0 1-1-1v-11a1 1 0 0 1 1-1z" />
          </svg>
          <svg width="17" height="15" viewBox="0 0 17 15" fill="none" stroke="#7a7a7a" className="ml-[23px]">
            <path d="M4 0v14M.5 10.500L4 14.300l3.500-3.800M12.500 15V1M9 4.500L12.500.7 16 4.500" />
          </svg>
          <svg width="20" height="6" viewBox="0 0 20 6" fill="none" stroke="#7a7a7a" className="ml-[21px]">
            <circle cx="3" cy="3" r="2" />
            <circle cx="10" cy="3" r="2" />
            <circle cx="17" cy="3" r="2" />
          </svg>
        </div>
      </div>
      <div className="-mt-[21px] flex pl-[55px] text-[13px] leading-[21px] tracking-[0.170px] whitespace-nowrap text-[#202020]">
        <span className="mt-[2px] h-[18px] w-[18px] rounded-full border border-[#808080]" />
        <div className="ml-[9px] underline underline-offset-2 [text-decoration-skip-ink:none]">
          How I Write an Essay (with Zettelkasten) -
          <br />
          <span className="tracking-[0.050px]">YouTube</span>
        </div>
      </div>
      <TaskCard />
    </div>
  );
}

/* Marker strokes laid over the page. */
function Highlights() {
  return (
    <svg width="1791" height="996" viewBox="0 0 1791 996" fill="#ff0" className="pointer-events-none absolute top-0 left-0 mix-blend-multiply">
      <path d="M19 13h13V3l65-.5V0h66l44 3 31 2 10 3 4.500 2v25l-6 4-28 2.500-2 1.200h-23l-23-2.500H130l-47-3v-2l-33-2.500L40 30l-21-.5z" />
      <path d="M248 8l4.500 2v25l-4.500 3z" fill="#e6e600" />
      <path d="M1738.500 40.500h13v-2h14l11 2 10.500 1 4 9v9.500l-7 1v10l-4 4.500-10 .5-21.500-1V63l-5-10h-5z" />
      <path d="M1323.300 253.300l10-1.300 43.400-1 48.300-1h48.300l33.400 1.300 43.300 3.400 33.300 1 38.400-.4v14.700l-38.400 2.300-33.300 1-46.700-1.300-40-1.300-56.600 1.300-73.400-2.300h-10z" />
      <path d="M1326.700 277.300l136.600-2 60 1.400 60 2.300 73.400 3 70.600 3.300V302l-10.600 2-66.700-.7-31.700-.6-5 4 5.700.6v8.700l-15.700-.7-80-.6h-53.300l-66.700-2.400L1330 310v-16.700l-3.300-1.600z" />
      <path d="M1319 499.300l34.300-2.600 16.700-4 16.700-1.400 26.600-.6 25.700-4.700v19l-22.300 1.700-33.400 1.600-20 5-20 2.400-24.300-.7z" />
    </svg>
  );
}

export default function App() {
  return (
    <div className="relative isolate flex h-[996px] w-[1791px] flex-col overflow-hidden bg-white font-['Open_Sans','Noto_Sans',sans-serif]">
      <TabStrip />
      <Toolbar />
      <Bookmarks />
      <div className="flex min-h-0 flex-1">
        <Sidebar />
        <Doc />
      </div>
      <Popup />
      <Highlights />
    </div>
  );
}
